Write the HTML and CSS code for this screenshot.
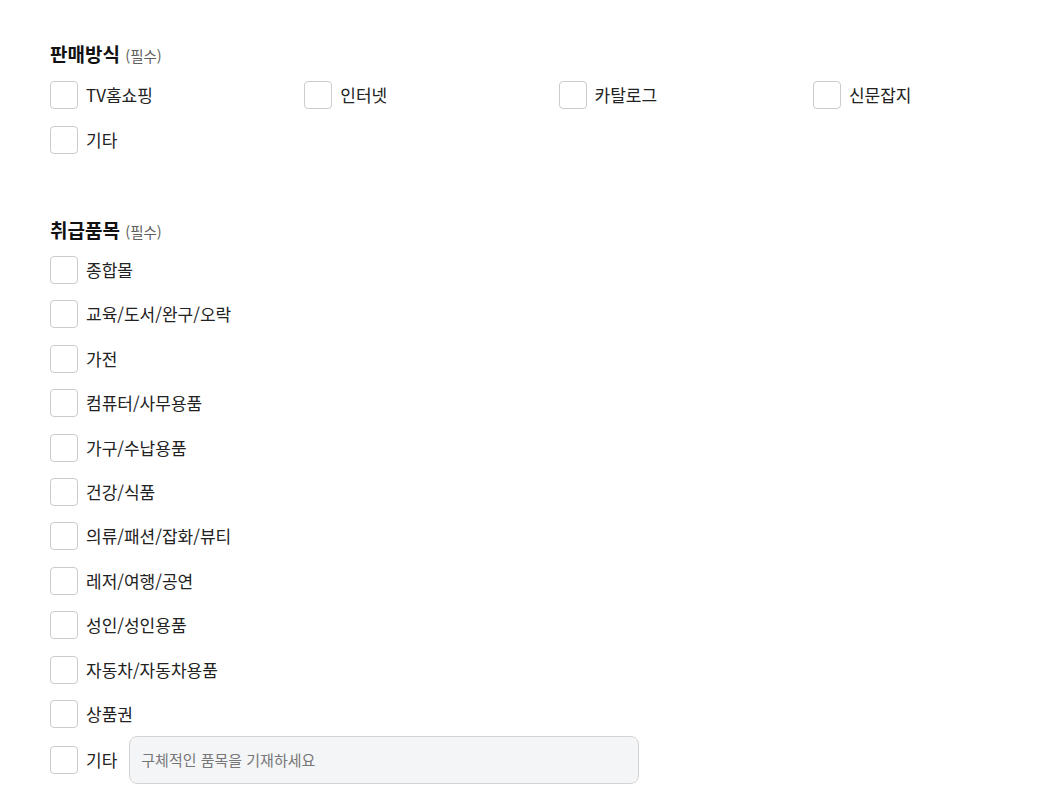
FILE: index.html
```html
<!DOCTYPE html>
<html lang="ko">
<head>
  <meta charset="UTF-8">
  <meta name="viewport" content="width=device-width, initial-scale=1.0">
  <title>판매정보</title>
  <link rel="stylesheet" href="styles.css">
</head>
<body>
  <div class="container">
    <section class="field">
      <h2 class="field-title">판매방식 <span class="req">(필수)</span></h2>
      <div class="options grid">
        <label class="option"><input type="checkbox" class="box"><span>TV홈쇼핑</span></label>
        <label class="option"><input type="checkbox" class="box"><span>인터넷</span></label>
        <label class="option"><input type="checkbox" class="box"><span>카탈로그</span></label>
        <label class="option"><input type="checkbox" class="box"><span>신문잡지</span></label>
        <label class="option"><input type="checkbox" class="box"><span>기타</span></label>
      </div>
    </section>

    <section class="field second">
      <h2 class="field-title">취급품목 <span class="req">(필수)</span></h2>
      <div class="options list">
        <label class="option"><input type="checkbox" class="box"><span>종합몰</span></label>
        <label class="option"><input type="checkbox" class="box"><span>교육/도서/완구/오락</span></label>
        <label class="option"><input type="checkbox" class="box"><span>가전</span></label>
        <label class="option"><input type="checkbox" class="box"><span>컴퓨터/사무용품</span></label>
        <label class="option"><input type="checkbox" class="box"><span>가구/수납용품</span></label>
        <label class="option"><input type="checkbox" class="box"><span>건강/식품</span></label>
        <label class="option"><input type="checkbox" class="box"><span>의류/패션/잡화/뷰티</span></label>
        <label class="option"><input type="checkbox" class="box"><span>레저/여행/공연</span></label>
        <label class="option"><input type="checkbox" class="box"><span>성인/성인용품</span></label>
        <label class="option"><input type="checkbox" class="box"><span>자동차/자동차용품</span></label>
        <label class="option"><input type="checkbox" class="box"><span>상품권</span></label>
        <div class="option etc-row">
          <label class="option"><input type="checkbox" class="box"><span>기타</span></label>
          <input type="text" class="etc-input" placeholder="구체적인 품목을 기재하세요">
        </div>
      </div>
    </section>
  </div>
</body>
</html>
```

FILE: styles.css
```css
body {
  margin: 0;
  font-family: "Noto Sans CJK KR", "Noto Sans", sans-serif;
  color: #222;
  background: #fff;
}
.container {
  padding: 41px 0 0 50px;
}
.field-title {
  margin: 0 0 12px;
  font-size: 19px;
  line-height: 26px;
  font-weight: 700;
  color: #111;
}
.req {
  font-size: 14.5px;
  font-weight: 400;
  color: #5f5f5f;
}
.second {
  margin-top: 63px;
}
.second .field-title {
  margin-bottom: 11px;
}
.options.grid {
  display: grid;
  grid-template-columns: repeat(4, 254.3px);
  row-gap: 17px;
}
.options.list {
  display: flex;
  flex-direction: column;
  align-items: flex-start;
  gap: 16.4px;
}
.option {
  display: flex;
  align-items: center;
  gap: 8px;
  font-size: 17px;
  line-height: 28px;
  cursor: pointer;
}
.etc-row {
  margin-top: -8.4px;
}
.box {
  appearance: none;
  margin: 0;
  width: 28px;
  height: 28px;
  border: 1px solid #ccc;
  border-radius: 4px;
  background: #fff;
  box-sizing: border-box;
}
.box:checked {
  background: #2b6cb0;
  border-color: #2b6cb0;
}
.etc-input {
  margin-left: 4px;
  width: 510px;
  height: 48px;
  box-sizing: border-box;
  padding: 0 11px;
  border: 1px solid #d4d4d4;
  border-radius: 8px;
  background: #f4f5f7;
  font-family: inherit;
  font-size: 15px;
  color: #222;
}
.etc-input::placeholder {
  color: #777;
}
```
